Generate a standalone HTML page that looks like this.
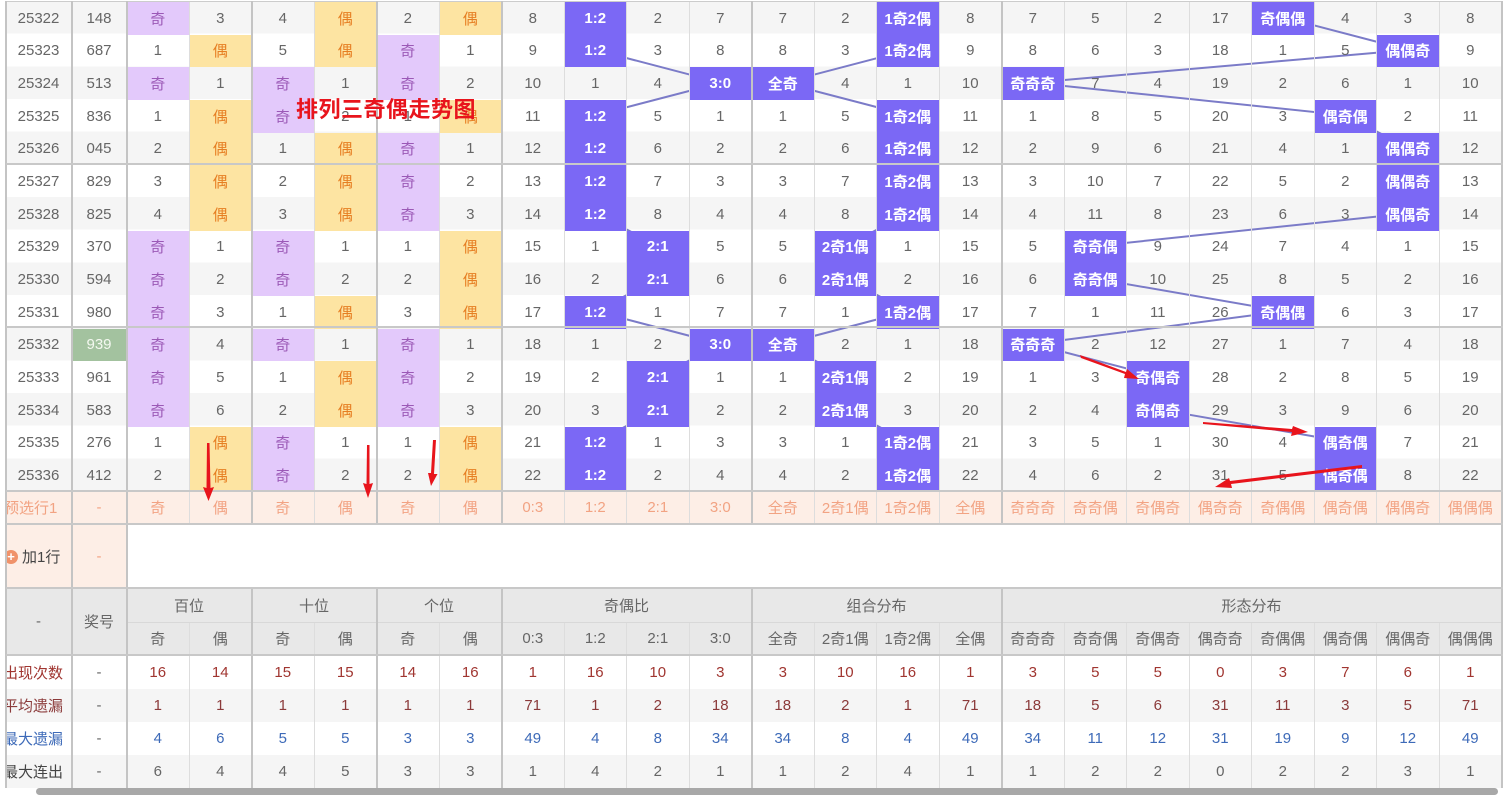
<!DOCTYPE html>
<html><head><meta charset="utf-8">
<style>
*{margin:0;padding:0;box-sizing:border-box}
html,body{width:1507px;height:793px;overflow:hidden;background:#fff;font-family:"Liberation Sans","Noto Sans CJK SC",sans-serif}
#stripe{position:absolute;left:6px;top:1px;width:1496px;height:490px;background:repeating-linear-gradient(#f5f5f5 0 32.67px,#fff 32.67px 65.33px);z-index:0}
svg{position:absolute;left:0;top:0;z-index:1}
#g{position:absolute;left:6px;top:1px;display:grid;grid-template-columns:66px 55px repeat(22,62.5px);
grid-template-rows:repeat(16,32.67px) 64px 34px 33px 33px 33px 33px 33px;z-index:2;border-top:1px solid #ccc}
#g>div{display:flex;align-items:center;justify-content:center;font-size:15px;color:#666;border-right:1px solid #ddd;white-space:nowrap;overflow:hidden}
#g>.p{background:#e3c9fb;color:#9b59b6}
#g>.y{background:#fde4a2;color:#e67e22}
#g>.b{background:#7b68f5;color:#fff;font-weight:bold}
#g>.gr{background:#a3c29f;color:#f4f8f0}
#g>.pr{background:#fdeee6;color:#f2a383;border-bottom:1px solid #ddd}
#g>.h{background:#e8e8e8;color:#666;border-bottom:1px solid #d8d8d8}
#g>.w{background:#fff}
#g>.s{background:#f5f5f5}
#g>.r1{color:#a03530}
#g>.r2{color:#8b3a3a}
#g>.bl{color:#3d6ab8}
.vl{position:absolute;width:2px;background:#c4c4c4;z-index:3}
.hl{position:absolute;height:2px;background:#c8c8c8;z-index:3}
#title{position:absolute;left:296px;top:92px;font-size:22px;font-weight:bold;color:#e8141c;z-index:5;letter-spacing:0.5px}
#arr{z-index:6}
#sb{position:absolute;left:36px;top:788px;width:1462px;height:7px;background:#a8a8a8;border-radius:4px}
</style></head><body>
<div id="stripe"></div>
<svg width="1507" height="793" viewBox="0 0 1507 793">
<g fill="none" stroke="#7b7bc8" stroke-width="2">
<polyline points="595.75,17.3 595.75,50 720.75,82.7 595.75,115.3 595.75,148 595.75,180.7 595.75,213.3 658.25,246 658.25,278.7 595.75,311.3 720.75,344 658.25,376.7 658.25,409.3 595.75,442 595.75,474.7"/>
<polyline points="908.25,17.3 908.25,50 783.25,82.7 908.25,115.3 908.25,148 908.25,180.7 908.25,213.3 845.75,246 845.75,278.7 908.25,311.3 783.25,344 845.75,376.7 845.75,409.3 908.25,442 908.25,474.7"/>
<polyline points="1283.25,17.3 1408.25,50 1033.25,82.7 1345.75,115.3 1408.25,148 1408.25,180.7 1408.25,213.3 1095.75,246 1095.75,278.7 1283.25,311.3 1033.25,344 1158.25,376.7 1158.25,409.3 1345.75,442 1345.75,474.7"/>
</g></svg>
<div id="g">
<div>25322</div><div>148</div><div class=p>奇</div><div>3</div><div>4</div><div class=y>偶</div><div>2</div><div class=y>偶</div><div>8</div><div class=b>1:2</div><div>2</div><div>7</div><div>7</div><div>2</div><div class=b>1奇2偶</div><div>8</div><div>7</div><div>5</div><div>2</div><div>17</div><div class=b>奇偶偶</div><div>4</div><div>3</div><div>8</div>
<div>25323</div><div>687</div><div>1</div><div class=y>偶</div><div>5</div><div class=y>偶</div><div class=p>奇</div><div>1</div><div>9</div><div class=b>1:2</div><div>3</div><div>8</div><div>8</div><div>3</div><div class=b>1奇2偶</div><div>9</div><div>8</div><div>6</div><div>3</div><div>18</div><div>1</div><div>5</div><div class=b>偶偶奇</div><div>9</div>
<div>25324</div><div>513</div><div class=p>奇</div><div>1</div><div class=p>奇</div><div>1</div><div class=p>奇</div><div>2</div><div>10</div><div>1</div><div>4</div><div class=b>3:0</div><div class=b>全奇</div><div>4</div><div>1</div><div>10</div><div class=b>奇奇奇</div><div>7</div><div>4</div><div>19</div><div>2</div><div>6</div><div>1</div><div>10</div>
<div>25325</div><div>836</div><div>1</div><div class=y>偶</div><div class=p>奇</div><div>2</div><div>1</div><div class=y>偶</div><div>11</div><div class=b>1:2</div><div>5</div><div>1</div><div>1</div><div>5</div><div class=b>1奇2偶</div><div>11</div><div>1</div><div>8</div><div>5</div><div>20</div><div>3</div><div class=b>偶奇偶</div><div>2</div><div>11</div>
<div>25326</div><div>045</div><div>2</div><div class=y>偶</div><div>1</div><div class=y>偶</div><div class=p>奇</div><div>1</div><div>12</div><div class=b>1:2</div><div>6</div><div>2</div><div>2</div><div>6</div><div class=b>1奇2偶</div><div>12</div><div>2</div><div>9</div><div>6</div><div>21</div><div>4</div><div>1</div><div class=b>偶偶奇</div><div>12</div>
<div>25327</div><div>829</div><div>3</div><div class=y>偶</div><div>2</div><div class=y>偶</div><div class=p>奇</div><div>2</div><div>13</div><div class=b>1:2</div><div>7</div><div>3</div><div>3</div><div>7</div><div class=b>1奇2偶</div><div>13</div><div>3</div><div>10</div><div>7</div><div>22</div><div>5</div><div>2</div><div class=b>偶偶奇</div><div>13</div>
<div>25328</div><div>825</div><div>4</div><div class=y>偶</div><div>3</div><div class=y>偶</div><div class=p>奇</div><div>3</div><div>14</div><div class=b>1:2</div><div>8</div><div>4</div><div>4</div><div>8</div><div class=b>1奇2偶</div><div>14</div><div>4</div><div>11</div><div>8</div><div>23</div><div>6</div><div>3</div><div class=b>偶偶奇</div><div>14</div>
<div>25329</div><div>370</div><div class=p>奇</div><div>1</div><div class=p>奇</div><div>1</div><div>1</div><div class=y>偶</div><div>15</div><div>1</div><div class=b>2:1</div><div>5</div><div>5</div><div class=b>2奇1偶</div><div>1</div><div>15</div><div>5</div><div class=b>奇奇偶</div><div>9</div><div>24</div><div>7</div><div>4</div><div>1</div><div>15</div>
<div>25330</div><div>594</div><div class=p>奇</div><div>2</div><div class=p>奇</div><div>2</div><div>2</div><div class=y>偶</div><div>16</div><div>2</div><div class=b>2:1</div><div>6</div><div>6</div><div class=b>2奇1偶</div><div>2</div><div>16</div><div>6</div><div class=b>奇奇偶</div><div>10</div><div>25</div><div>8</div><div>5</div><div>2</div><div>16</div>
<div>25331</div><div>980</div><div class=p>奇</div><div>3</div><div>1</div><div class=y>偶</div><div>3</div><div class=y>偶</div><div>17</div><div class=b>1:2</div><div>1</div><div>7</div><div>7</div><div>1</div><div class=b>1奇2偶</div><div>17</div><div>7</div><div>1</div><div>11</div><div>26</div><div class=b>奇偶偶</div><div>6</div><div>3</div><div>17</div>
<div>25332</div><div class=gr>939</div><div class=p>奇</div><div>4</div><div class=p>奇</div><div>1</div><div class=p>奇</div><div>1</div><div>18</div><div>1</div><div>2</div><div class=b>3:0</div><div class=b>全奇</div><div>2</div><div>1</div><div>18</div><div class=b>奇奇奇</div><div>2</div><div>12</div><div>27</div><div>1</div><div>7</div><div>4</div><div>18</div>
<div>25333</div><div>961</div><div class=p>奇</div><div>5</div><div>1</div><div class=y>偶</div><div class=p>奇</div><div>2</div><div>19</div><div>2</div><div class=b>2:1</div><div>1</div><div>1</div><div class=b>2奇1偶</div><div>2</div><div>19</div><div>1</div><div>3</div><div class=b>奇偶奇</div><div>28</div><div>2</div><div>8</div><div>5</div><div>19</div>
<div>25334</div><div>583</div><div class=p>奇</div><div>6</div><div>2</div><div class=y>偶</div><div class=p>奇</div><div>3</div><div>20</div><div>3</div><div class=b>2:1</div><div>2</div><div>2</div><div class=b>2奇1偶</div><div>3</div><div>20</div><div>2</div><div>4</div><div class=b>奇偶奇</div><div>29</div><div>3</div><div>9</div><div>6</div><div>20</div>
<div>25335</div><div>276</div><div>1</div><div class=y>偶</div><div class=p>奇</div><div>1</div><div>1</div><div class=y>偶</div><div>21</div><div class=b>1:2</div><div>1</div><div>3</div><div>3</div><div>1</div><div class=b>1奇2偶</div><div>21</div><div>3</div><div>5</div><div>1</div><div>30</div><div>4</div><div class=b>偶奇偶</div><div>7</div><div>21</div>
<div>25336</div><div>412</div><div>2</div><div class=y>偶</div><div class=p>奇</div><div>2</div><div>2</div><div class=y>偶</div><div>22</div><div class=b>1:2</div><div>2</div><div>4</div><div>4</div><div>2</div><div class=b>1奇2偶</div><div>22</div><div>4</div><div>6</div><div>2</div><div>31</div><div>5</div><div class=b>偶奇偶</div><div>8</div><div>22</div>
<div class=pr style="justify-content:flex-start;text-indent:-2px">预选行1</div><div class=pr>-</div><div class=pr>奇</div><div class=pr>偶</div><div class=pr>奇</div><div class=pr>偶</div><div class=pr>奇</div><div class=pr>偶</div><div class=pr>0:3</div><div class=pr>1:2</div><div class=pr>2:1</div><div class=pr>3:0</div><div class=pr>全奇</div><div class=pr>2奇1偶</div><div class=pr>1奇2偶</div><div class=pr>全偶</div><div class=pr>奇奇奇</div><div class=pr>奇奇偶</div><div class=pr>奇偶奇</div><div class=pr>偶奇奇</div><div class=pr>奇偶偶</div><div class=pr>偶奇偶</div><div class=pr>偶偶奇</div><div class=pr>偶偶偶</div>
<div class=pr style="justify-content:flex-start;border-bottom:none"><span style="display:inline-block;width:14px;height:14px;border-radius:7px;background:#f0926a;color:#fff;font-size:13px;line-height:14px;text-align:center;margin-left:-2px;margin-right:4px;font-weight:bold">+</span><span style="color:#444">加1行</span></div><div class=pr style="border-bottom:none">-</div><div class=w style="grid-column:span 22"></div>
<div class=h style="grid-row:span 2">-</div><div class=h style="grid-row:span 2">奖号</div>
<div class=h style="grid-column:span 2">百位</div><div class=h style="grid-column:span 2">十位</div><div class=h style="grid-column:span 2">个位</div><div class=h style="grid-column:span 4">奇偶比</div><div class=h style="grid-column:span 4">组合分布</div><div class=h style="grid-column:span 8">形态分布</div>
<div class=h>奇</div><div class=h>偶</div><div class=h>奇</div><div class=h>偶</div><div class=h>奇</div><div class=h>偶</div><div class=h>0:3</div><div class=h>1:2</div><div class=h>2:1</div><div class=h>3:0</div><div class=h>全奇</div><div class=h>2奇1偶</div><div class=h>1奇2偶</div><div class=h>全偶</div><div class=h>奇奇奇</div><div class=h>奇奇偶</div><div class=h>奇偶奇</div><div class=h>偶奇奇</div><div class=h>奇偶偶</div><div class=h>偶奇偶</div><div class=h>偶偶奇</div><div class=h>偶偶偶</div>
<div class="w r1" style="justify-content:flex-end;padding-right:8px">出现次数</div><div class=w>-</div><div class="w r1">16</div><div class="w r1">14</div><div class="w r1">15</div><div class="w r1">15</div><div class="w r1">14</div><div class="w r1">16</div><div class="w r1">1</div><div class="w r1">16</div><div class="w r1">10</div><div class="w r1">3</div><div class="w r1">3</div><div class="w r1">10</div><div class="w r1">16</div><div class="w r1">1</div><div class="w r1">3</div><div class="w r1">5</div><div class="w r1">5</div><div class="w r1">0</div><div class="w r1">3</div><div class="w r1">7</div><div class="w r1">6</div><div class="w r1">1</div>
<div class="s r2" style="justify-content:flex-end;padding-right:8px">平均遗漏</div><div class=s>-</div><div class="s r2">1</div><div class="s r2">1</div><div class="s r2">1</div><div class="s r2">1</div><div class="s r2">1</div><div class="s r2">1</div><div class="s r2">71</div><div class="s r2">1</div><div class="s r2">2</div><div class="s r2">18</div><div class="s r2">18</div><div class="s r2">2</div><div class="s r2">1</div><div class="s r2">71</div><div class="s r2">18</div><div class="s r2">5</div><div class="s r2">6</div><div class="s r2">31</div><div class="s r2">11</div><div class="s r2">3</div><div class="s r2">5</div><div class="s r2">71</div>
<div class="w bl" style="justify-content:flex-end;padding-right:8px">最大遗漏</div><div class=w>-</div><div class="w bl">4</div><div class="w bl">6</div><div class="w bl">5</div><div class="w bl">5</div><div class="w bl">3</div><div class="w bl">3</div><div class="w bl">49</div><div class="w bl">4</div><div class="w bl">8</div><div class="w bl">34</div><div class="w bl">34</div><div class="w bl">8</div><div class="w bl">4</div><div class="w bl">49</div><div class="w bl">34</div><div class="w bl">11</div><div class="w bl">12</div><div class="w bl">31</div><div class="w bl">19</div><div class="w bl">9</div><div class="w bl">12</div><div class="w bl">49</div>
<div class=s style="justify-content:flex-end;padding-right:8px;color:#444">最大连出</div><div class=s>-</div><div class=s>6</div><div class=s>4</div><div class=s>4</div><div class=s>5</div><div class=s>3</div><div class=s>3</div><div class=s>1</div><div class=s>4</div><div class=s>2</div><div class=s>1</div><div class=s>1</div><div class=s>2</div><div class=s>4</div><div class=s>1</div><div class=s>1</div><div class=s>2</div><div class=s>2</div><div class=s>0</div><div class=s>2</div><div class=s>2</div><div class=s>3</div><div class=s>1</div>
</div>
<div class=vl style="left:5px;top:1px;height:787px"></div>
<div class=vl style="left:71px;top:1px;height:787px"></div>
<div class=vl style="left:126px;top:1px;height:787px"></div>
<div class=vl style="left:251px;top:1px;height:523px"></div><div class=vl style="left:251px;top:588px;height:200px"></div>
<div class=vl style="left:376px;top:1px;height:523px"></div><div class=vl style="left:376px;top:588px;height:200px"></div>
<div class=vl style="left:501px;top:1px;height:523px"></div><div class=vl style="left:501px;top:588px;height:200px"></div>
<div class=vl style="left:751px;top:1px;height:523px"></div><div class=vl style="left:751px;top:588px;height:200px"></div>
<div class=vl style="left:1001px;top:1px;height:523px"></div><div class=vl style="left:1001px;top:588px;height:200px"></div>
<div class=vl style="left:1501px;top:1px;height:787px"></div>
<div class=hl style="left:6px;top:163px;width:1497px"></div>
<div class=hl style="left:6px;top:326px;width:1497px"></div>
<div class=hl style="left:6px;top:490px;width:1497px"></div>
<div class=hl style="left:6px;top:523px;width:1497px"></div>
<div class=hl style="left:6px;top:587px;width:1497px"></div>
<div class=hl style="left:6px;top:654px;width:1497px"></div>
<div id="title">排列三奇偶走势图</div>
<svg id="arr" width="1507" height="793" viewBox="0 0 1507 793">
<g fill="#e8141c">
<polygon points="207,443 209.5,443 210.5,488 214,487 208.5,501 203,487 206.5,488"/>
<polygon points="367,445 369.5,445 369.5,484 373,483 368,498 363,483 366.5,484"/>
<polygon points="433,440 436,440 434,474 437.5,474 431,486 428,473 431,473"/>
<polygon points="1080,355 1081,358 1125,374 1124,378 1139,379 1127,369 1126,372"/>
<polygon points="1203,422 1203,424 1292,432 1291,436 1308,432 1293,426 1292,429"/>
<polygon points="1362,465 1362,468 1231,484 1232,488 1215,487 1229,478 1230,481"/>
</g></svg>
<div id="sb"></div>
</body></html>
